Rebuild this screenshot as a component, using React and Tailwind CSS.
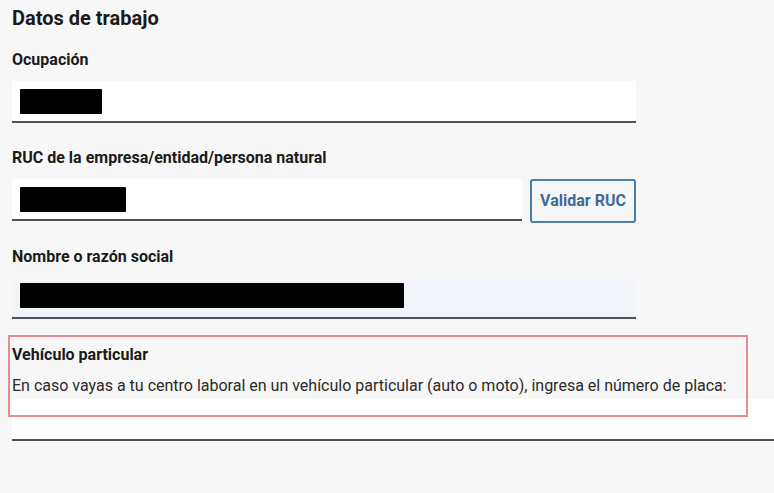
import { useState } from 'react';

const Redacted = ({ width }) => (
  <span className="block h-[25px] bg-black rounded-[1px]" style={{ width }} />
);

const Field = ({ children, className = 'bg-white h-[42px] items-center' }) => (
  <div className={`flex px-2 border-b-2 border-[#4b525a] ${className}`}>{children}</div>
);

const App = () => {
  const [placa, setPlaca] = useState('');

  return (
    <div
      className="min-h-[493px] bg-[#f7f7f7] px-3 pt-[6px] text-[#1a1a1a]"
      style={{ fontFamily: 'Roboto, "Liberation Sans", sans-serif' }}
    >
      <h2 className="text-[20px] font-bold leading-[24px]">Datos de trabajo</h2>

      {/* Ocupación */}
      <div className="mt-[20px] w-[624px]">
        <label className="block text-[16px] font-bold leading-[20px]">Ocupación</label>
        <Field className="mt-[11px] bg-white h-[42px] items-center">
          <Redacted width={82} />
        </Field>
      </div>

      {/* RUC */}
      <div className="mt-[25px] w-[624px]">
        <label className="block text-[16px] font-bold leading-[20px]">
          RUC de la empresa/entidad/persona natural
        </label>
        <div className="mt-[11px] flex items-start gap-2">
          <Field className="flex-1 bg-white h-[42px] items-center">
            <Redacted width={106} />
          </Field>
          <button className="w-[106px] h-[44px] rounded-[3px] border-2 border-[#4a7fa8] text-[#3f6a97] text-[16px] font-bold bg-transparent">
            Validar RUC
          </button>
        </div>
      </div>

      {/* Nombre */}
      <div className="mt-[24px] w-[624px]">
        <label className="block text-[16px] font-bold leading-[20px]">Nombre o razón social</label>
        <Field className="mt-[12px] h-[40px] bg-[#f1f5fa] items-start pt-[4px]">
          <Redacted width={384} />
        </Field>
      </div>

      {/* Vehículo particular */}
      <div className="relative mt-[26px]">
        <div className="absolute left-[-4px] top-[-10px] w-[740px] h-[82px] border-2 border-[#e88a90] pointer-events-none" />
        <label className="block text-[16px] font-bold leading-[20px]">Vehículo particular</label>
        <p className="mt-[11px] text-[16px] leading-[20px] text-[#2a2a2a]">
          En caso vayas a tu centro laboral en un vehículo particular (auto o moto), ingresa el número de placa:
        </p>
        <input
          value={placa}
          onChange={(e) => setPlaca(e.target.value)}
          className="mt-[3px] block w-[780px] h-[42px] bg-white border-b-2 border-[#4b525a] outline-none px-2"
        />
      </div>
    </div>
  );
};

export default App;
